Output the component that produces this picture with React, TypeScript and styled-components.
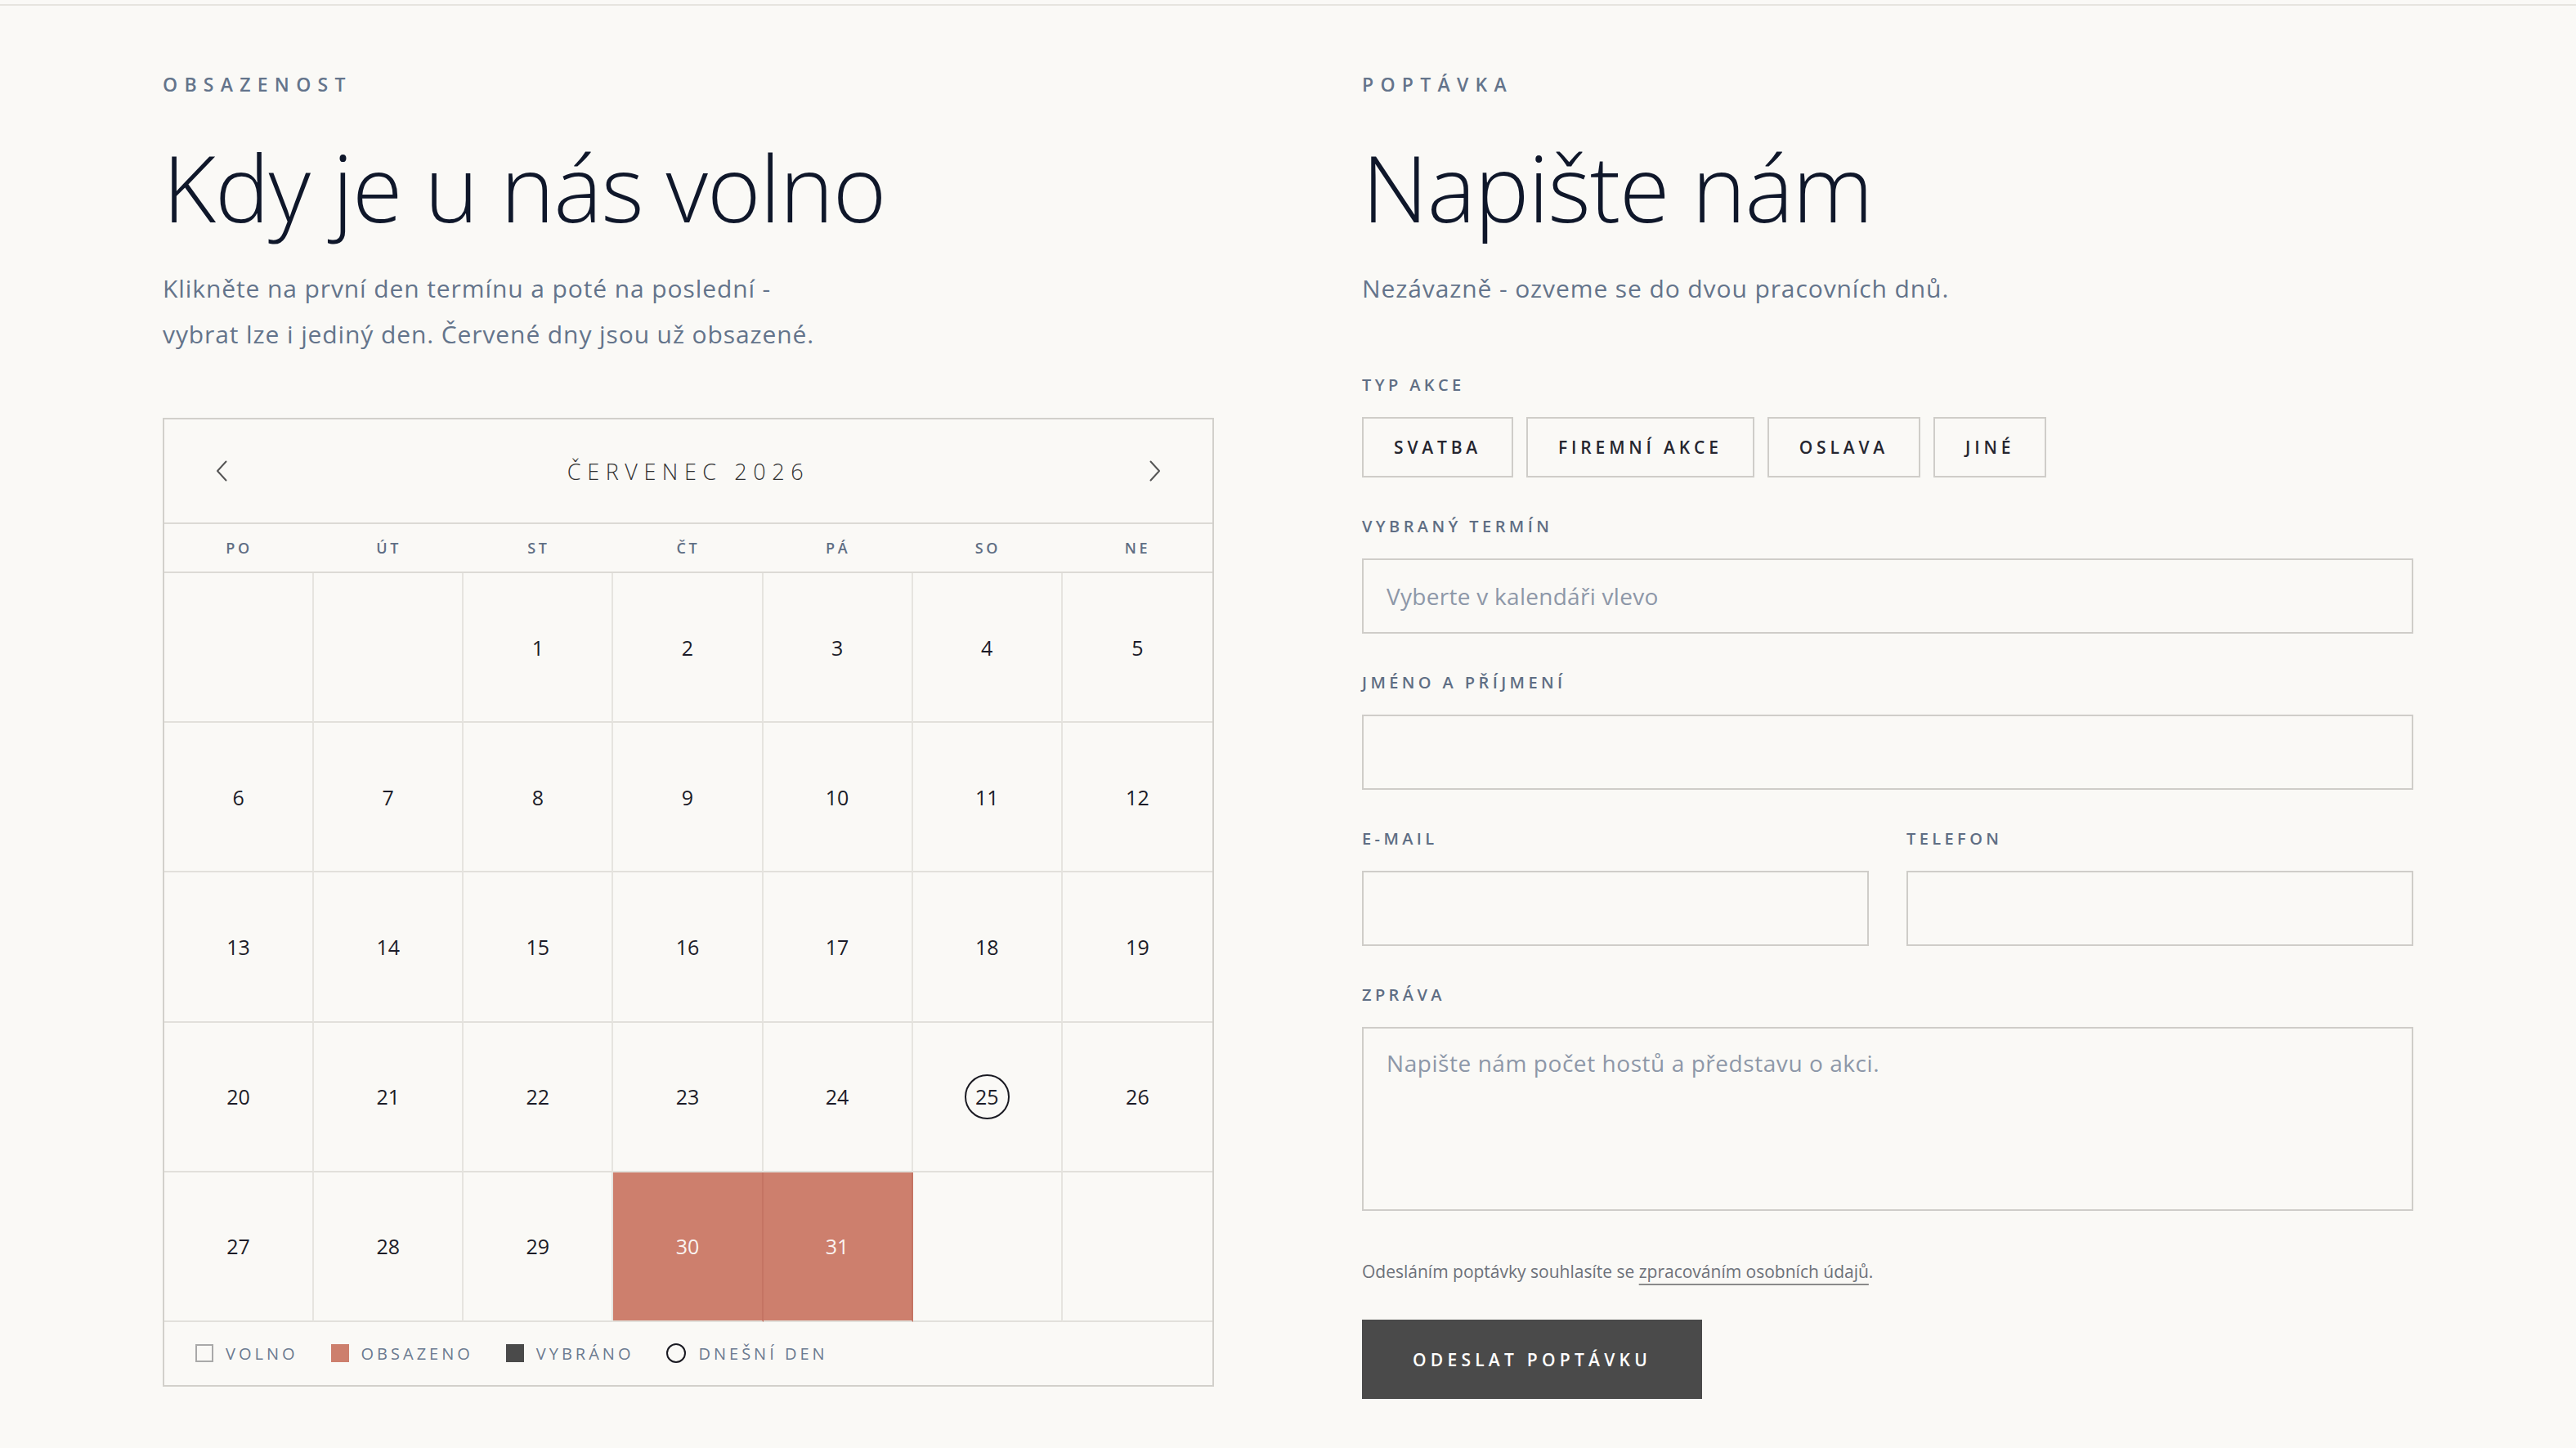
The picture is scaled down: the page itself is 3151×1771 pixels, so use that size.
import React from "react";
import styled, { createGlobalStyle } from "styled-components";

const GlobalStyle = createGlobalStyle`
  * { box-sizing: border-box; }
  html, body { margin: 0; padding: 0; }
  body {
    background: #faf9f6;
    font-family: "Open Sans", "Noto Sans", sans-serif;
    color: #0f172a;
  }
`;

const TopRule = styled.div`
  height: 2px;
  margin-top: 5px;
  background: #e6e4df;
`;

const Section = styled.section`
  display: grid;
  grid-template-columns: 1fr 1fr;
  column-gap: 181px;
  padding: 79px 199px 60px;
`;

const Column = styled.div`
  display: flex;
  flex-direction: column;
  min-width: 0;
`;

const Eyebrow = styled.div`
  font-size: 23px;
  line-height: 34px;
  font-weight: 600;
  letter-spacing: 0.36em;
  color: #64748b;
  text-transform: uppercase;
`;

const Heading = styled.h2`
  margin: 47px 0 0;
  font-size: 112px;
  line-height: 1.1;
  font-weight: 300;
  letter-spacing: -0.01em;
  color: #0f172a;
`;

const Lead = styled.p`
  margin: 35px 0 0;
  font-size: 30px;
  line-height: 56px;
  font-weight: 400;
  letter-spacing: 0.03em;
  color: #64748b;
`;

/* ---------- calendar ---------- */

const Calendar = styled.div`
  margin-top: 74px;
  border: 2px solid #d2d0cb;
`;

const CalHeader = styled.div`
  display: grid;
  grid-template-columns: 28px 1fr 28px;
  align-items: center;
  height: 128px;
  padding: 0 56px;
  border-bottom: 2px solid #dcdad5;
`;

const NavButton = styled.button`
  display: flex;
  align-items: center;
  justify-content: center;
  width: 28px;
  height: 40px;
  padding: 0;
  border: 0;
  background: none;
  color: #555;
  cursor: pointer;
`;

const MonthTitle = styled.div`
  text-align: center;
  font-size: 27px;
  font-weight: 300;
  letter-spacing: 0.28em;
  color: #333;
`;

const WeekRow = styled.div`
  display: grid;
  grid-template-columns: repeat(7, 1fr);
  height: 60px;
  align-items: center;
  border-bottom: 2px solid #dcdad5;
`;

const WeekDay = styled.div`
  text-align: center;
  font-size: 18px;
  font-weight: 600;
  letter-spacing: 0.2em;
  color: #5f6e84;
`;

const DayGrid = styled.div`
  display: grid;
  grid-template-columns: repeat(7, 1fr);
`;

const DayCell = styled.div<{ $busy?: boolean }>`
  aspect-ratio: 1 / 1;
  display: flex;
  align-items: center;
  justify-content: center;
  border-right: 2px solid ${(p) => (p.$busy ? "#c47463" : "#e6e4df")};
  border-bottom: 2px solid #e2e0db;
  background: ${(p) => (p.$busy ? "#cd7f6d" : "transparent")};
  &:nth-child(7n) { border-right: 0; }
`;

const DayNum = styled.span<{ $busy?: boolean; $today?: boolean }>`
  display: flex;
  align-items: center;
  justify-content: center;
  width: 55px;
  height: 55px;
  border-radius: 50%;
  border: 2px solid ${(p) => (p.$today ? "#1a1a22" : "transparent")};
  font-size: 25px;
  color: ${(p) => (p.$busy ? "rgba(255,255,255,0.92)" : "#1c1c28")};
`;

const Legend = styled.div`
  display: flex;
  align-items: center;
  gap: 40px;
  height: 77px;
  padding: 0 38px;
`;

const LegendItem = styled.div`
  display: flex;
  align-items: center;
  gap: 15px;
  font-size: 20px;
  letter-spacing: 0.2em;
  color: #6b7a90;
`;

type SwatchKind = "free" | "busy" | "picked" | "today";

const Swatch = styled.span<{ $kind: SwatchKind }>`
  display: inline-block;
  width: ${(p) => (p.$kind === "today" ? "24px" : "22px")};
  height: ${(p) => (p.$kind === "today" ? "24px" : "22px")};
  border-radius: ${(p) => (p.$kind === "today" ? "50%" : "0")};
  border: 2px solid
    ${(p) =>
      p.$kind === "free"
        ? "#a9a9a9"
        : p.$kind === "busy"
        ? "#cd7f6d"
        : p.$kind === "picked"
        ? "#4a4a4a"
        : "#1a1a22"};
  background: ${(p) =>
    p.$kind === "busy" ? "#cd7f6d" : p.$kind === "picked" ? "#4a4a4a" : "transparent"};
`;

/* ---------- form ---------- */

const Form = styled.form`
  display: flex;
  flex-direction: column;
  gap: 45px;
  margin-top: 75px;
`;

const Field = styled.div`
  display: flex;
  flex-direction: column;
  min-width: 0;
`;

const Label = styled.label`
  display: block;
  margin-bottom: 24px;
  font-size: 20px;
  line-height: 30px;
  font-weight: 600;
  letter-spacing: 0.22em;
  color: #5f6e84;
`;

const TypeRow = styled.div`
  display: flex;
  gap: 16px;
`;

const TypeButton = styled.button`
  height: 74px;
  padding: 0 37px;
  border: 2px solid #cfcdc9;
  background: transparent;
  font-family: inherit;
  font-size: 21px;
  font-weight: 600;
  letter-spacing: 0.23em;
  color: #262630;
  cursor: pointer;
`;

const Input = styled.input`
  width: 100%;
  height: 92px;
  padding: 0 28px;
  border: 2px solid #cfcdc9;
  background: transparent;
  font-family: inherit;
  font-size: 28px;
  letter-spacing: 0.01em;
  color: #1c1c28;
  outline: none;
  &::placeholder { color: #8d97a8; }
`;

const TextArea = styled.textarea`
  width: 100%;
  height: 225px;
  padding: 22px 28px;
  border: 2px solid #cfcdc9;
  background: transparent;
  font-family: inherit;
  font-size: 28px;
  line-height: 40px;
  letter-spacing: 0.02em;
  color: #1c1c28;
  resize: none;
  outline: none;
  &::placeholder { color: #8d97a8; }
`;

const TwoCols = styled.div`
  display: grid;
  grid-template-columns: 1fr 1fr;
  column-gap: 46px;
`;

const Consent = styled.p`
  margin: 14px 0 0;
  font-size: 21px;
  line-height: 30px;
  color: #6d717a;
`;

const ConsentLink = styled.a`
  color: inherit;
  text-decoration: underline;
  text-decoration-color: #8a8a8a;
  text-decoration-thickness: 2px;
  text-underline-offset: 7px;
`;

const Submit = styled.button`
  align-self: flex-start;
  height: 97px;
  margin-top: -1px;
  padding: 0 62px;
  border: 0;
  background: #4a4a4a;
  color: #fff;
  font-family: inherit;
  font-size: 21px;
  font-weight: 600;
  letter-spacing: 0.25em;
  cursor: pointer;
`;

const Chevron = ({ dir }: { dir: "left" | "right" }) => (
  <svg width="14" height="26" viewBox="0 0 14 26" fill="none">
    <path
      d={dir === "left" ? "M12.5 1.5 L2 13 L12.5 24.5" : "M1.5 1.5 L12 13 L1.5 24.5"}
      stroke="currentColor"
      strokeWidth="2"
      strokeLinecap="round"
      strokeLinejoin="round"
    />
  </svg>
);

const WEEKDAYS = ["PO", "ÚT", "ST", "ČT", "PÁ", "SO", "NE"];
const BUSY = new Set([30, 31]);
const TODAY = 25;

function buildCells(): (number | null)[] {
  const lead = 2; // 1. 7. 2026 is a Wednesday
  const cells: (number | null)[] = [];
  for (let i = 0; i < lead; i++) cells.push(null);
  for (let d = 1; d <= 31; d++) cells.push(d);
  while (cells.length % 7 !== 0) cells.push(null);
  return cells;
}

const LEGEND: { kind: SwatchKind; text: string }[] = [
  { kind: "free", text: "VOLNO" },
  { kind: "busy", text: "OBSAZENO" },
  { kind: "picked", text: "VYBRÁNO" },
  { kind: "today", text: "DNEŠNÍ DEN" },
];

const TYPES = ["SVATBA", "FIREMNÍ AKCE", "OSLAVA", "JINÉ"];

export default function App() {
  const cells = buildCells();
  return (
    <>
      <GlobalStyle />
      <TopRule />
      <Section>
        <Column>
          <Eyebrow>Obsazenost</Eyebrow>
          <Heading>Kdy je u nás volno</Heading>
          <Lead>
            Klikněte na první den termínu a poté na poslední -
            <br />
            vybrat lze i jediný den. Červené dny jsou už obsazené.
          </Lead>

          <Calendar>
            <CalHeader>
              <NavButton aria-label="Předchozí měsíc">
                <Chevron dir="left" />
              </NavButton>
              <MonthTitle>ČERVENEC 2026</MonthTitle>
              <NavButton aria-label="Další měsíc">
                <Chevron dir="right" />
              </NavButton>
            </CalHeader>
            <WeekRow>
              {WEEKDAYS.map((w) => (
                <WeekDay key={w}>{w}</WeekDay>
              ))}
            </WeekRow>
            <DayGrid>
              {cells.map((d, i) => {
                const busy = d !== null && BUSY.has(d);
                return (
                  <DayCell key={i} $busy={busy}>
                    {d !== null && (
                      <DayNum $busy={busy} $today={d === TODAY}>
                        {d}
                      </DayNum>
                    )}
                  </DayCell>
                );
              })}
            </DayGrid>
            <Legend>
              {LEGEND.map((l) => (
                <LegendItem key={l.text}>
                  <Swatch $kind={l.kind} />
                  {l.text}
                </LegendItem>
              ))}
            </Legend>
          </Calendar>
        </Column>

        <Column>
          <Eyebrow>Poptávka</Eyebrow>
          <Heading>Napište nám</Heading>
          <Lead>Nezávazně - ozveme se do dvou pracovních dnů.</Lead>

          <Form onSubmit={(e) => e.preventDefault()}>
            <Field>
              <Label>TYP AKCE</Label>
              <TypeRow>
                {TYPES.map((t) => (
                  <TypeButton type="button" key={t}>
                    {t}
                  </TypeButton>
                ))}
              </TypeRow>
            </Field>
            <Field>
              <Label>VYBRANÝ TERMÍN</Label>
              <Input placeholder="Vyberte v kalendáři vlevo" readOnly />
            </Field>
            <Field>
              <Label>JMÉNO A PŘÍJMENÍ</Label>
              <Input />
            </Field>
            <TwoCols>
              <Field>
                <Label>E-MAIL</Label>
                <Input type="email" />
              </Field>
              <Field>
                <Label>TELEFON</Label>
                <Input type="tel" />
              </Field>
            </TwoCols>
            <Field>
              <Label>ZPRÁVA</Label>
              <TextArea placeholder="Napište nám počet hostů a představu o akci." />
            </Field>
            <Consent>
              Odesláním poptávky souhlasíte se{" "}
              <ConsentLink href="#">zpracováním osobních údajů</ConsentLink>.
            </Consent>
            <Submit type="submit">ODESLAT POPTÁVKU</Submit>
          </Form>
        </Column>
      </Section>
    </>
  );
}
